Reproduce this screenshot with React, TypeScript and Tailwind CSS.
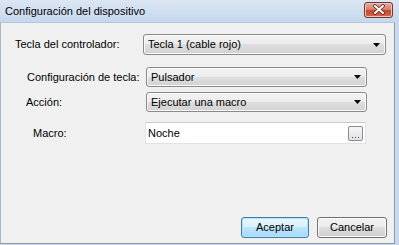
import React from "react";

const font = { fontFamily: '"Liberation Sans", Arial, sans-serif' };

function Arrow() {
  return (
    <svg width="7" height="4" viewBox="0 0 7 4" className="shrink-0">
      <path d="M0 0h7L3.5 4z" fill="#000" />
    </svg>
  );
}

function Combo({ value, className }: { value: string; className: string }) {
  return (
    <div
      className={`flex items-center justify-between rounded-[3px] border border-[#8a8a8a] bg-[linear-gradient(#f3f3f3,#ececec_50%,#dedede_50%,#d2d2d2)] pl-[4px] pr-[5px] text-[11px] text-black shadow-[inset_0_0_0_1px_#fbfbfb] ${className}`}
    >
      <span>{value}</span>
      <Arrow />
    </div>
  );
}

function CloseIcon() {
  return (
    <svg width="14" height="11" viewBox="0 0 14 11">
      <path d="M3 2l8 7M11 2l-8 7" stroke="#5a2a22" strokeWidth="3.6" strokeLinecap="round" />
      <path d="M3 2l8 7M11 2l-8 7" stroke="#fff" strokeWidth="2" strokeLinecap="round" />
    </svg>
  );
}

export default function App() {
  return (
    <div className="flex h-[245px] w-[399px] flex-col bg-[#c9d9ed]" style={font}>
      <div className="flex h-[22px] shrink-0 items-center justify-between bg-[linear-gradient(#dbe6f3,#c6d7ec)] pl-[5px] pr-[6px]">
        <span className="text-[11px] text-black">Configuración del dispositivo</span>
        <button className="mt-[-3px] flex h-[16px] w-[29px] items-center justify-center rounded-[3px] border border-[#6d3a34] bg-[linear-gradient(#e9a99c,#d7806f_45%,#c2452e_55%,#d46a4d)] shadow-[inset_0_0_0_1px_#f2c1b6]">
          <CloseIcon />
        </button>
      </div>
      <div className="mr-[4px] mb-[1px] flex flex-1 flex-col border-t border-r border-b border-l border-t-[#b4c6dc] border-r-[#8e9aa8] border-b-[#8e9aa8] border-l-[#a9b6c4] bg-[#f0f0f0] text-[11px] text-black">
        <div className="mt-[11px] flex items-center pl-[14px]">
          <span className="w-[128px]">Tecla del controlador:</span>
          <Combo value="Tecla 1 (cable rojo)" className="h-[21px] w-[243px]" />
        </div>
        <div className="mt-[12px] flex items-center pl-[26px]">
          <span className="w-[119px]">Configuración de tecla:</span>
          <Combo value="Pulsador" className="h-[20px] w-[221px]" />
        </div>
        <div className="mt-[5px] flex items-center pl-[25px]">
          <span className="w-[120px]">Acción:</span>
          <Combo value="Ejecutar una macro" className="h-[20px] w-[221px]" />
        </div>
        <div className="mt-[10px] flex items-center pl-[32px]">
          <span className="w-[112px]">Macro:</span>
          <div className="flex h-[22px] w-[221px] items-center justify-between border border-[#dfe3e8] border-t-[#c5ccd4] bg-white pl-[2px] pr-[2px]">
            <span>Noche</span>
            <div className="flex h-[15px] w-[15px] items-end justify-center rounded-[2px] border border-[#8a8a8a] bg-[linear-gradient(#f6f6f6,#e2e2e2)] pb-[2px]">
              <div className="flex gap-[2px]">
                <span className="h-[1px] w-[1px] bg-[#3a3aa0]" />
                <span className="h-[1px] w-[1px] bg-[#3a3aa0]" />
                <span className="h-[1px] w-[1px] bg-[#3a3aa0]" />
              </div>
            </div>
          </div>
        </div>
        <div className="mt-auto mb-[5px] flex justify-end gap-[8px] pr-[7px]">
          <button className="flex h-[21px] w-[68px] items-center justify-center rounded-[3px] border border-[#3c7fb1] bg-[linear-gradient(#eaf6fd,#d9f0fc_50%,#bee6fd_50%,#a7d9f5)] text-[11px] shadow-[inset_0_0_0_1px_#b6e2f8]">
            Aceptar
          </button>
          <button className="flex h-[21px] w-[70px] items-center justify-center rounded-[3px] border border-[#707070] bg-[linear-gradient(#f2f2f2,#ebebeb_50%,#dddddd_50%,#cfcfcf)] text-[11px] shadow-[inset_0_0_0_1px_#fcfcfc]">
            Cancelar
          </button>
        </div>
      </div>
    </div>
  );
}
